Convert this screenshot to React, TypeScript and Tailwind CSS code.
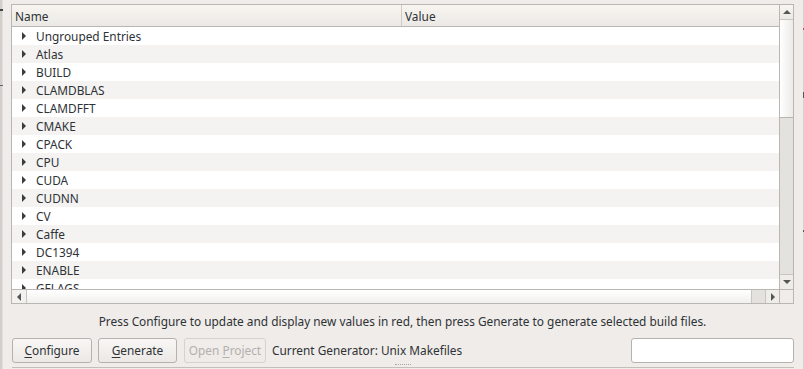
import React from "react";

const rows = [
    "Ungrouped Entries",
    "Atlas",
    "BUILD",
    "CLAMDBLAS",
    "CLAMDFFT",
    "CMAKE",
    "CPACK",
    "CPU",
    "CUDA",
    "CUDNN",
    "CV",
    "Caffe",
    "DC1394",
    "ENABLE",
    "GFLAGS",
];

function Arrow({ dir, className = "" }: { dir: "up" | "down" | "left" | "right"; className?: string }) {
    const pts = {
        up: "0,5 4,1 8,5",
        down: "0,1 4,5 8,1",
        left: "5,0 1,4 5,8",
        right: "1,0 5,4 1,8",
    }[dir];
    const vertical = dir === "up" || dir === "down";
    return (
        <svg width={vertical ? 8 : 6} height={vertical ? 6 : 8} viewBox={vertical ? "0 0 8 6" : "0 0 6 8"} className={className}>
            <polygon points={pts} fill="currentColor" />
        </svg>
    );
}

function Btn({ children, disabled }: { children: React.ReactNode; disabled?: boolean }) {
    return (
        <div
            className={
                "h-[25px] flex items-center justify-center rounded-[3px] border bg-gradient-to-b " +
                (disabled
                    ? "border-[#d6d3cf] from-[#f0edea] to-[#eeebe8] text-[#b3b0ad]"
                    : "border-[#b5b2ae] from-[#f9f7f5] to-[#ebe8e5] text-[#2e3236]")
            }
        >
            {children}
        </div>
    );
}

export default function App() {
    return (
        <div
            className="w-[804px] h-[369px] bg-[#efece9] flex overflow-hidden text-[11.85px] text-[#2e3236]"
            style={{ fontFamily: '"Noto Sans", "Open Sans", sans-serif' }}
        >
            {/* edge of neighbouring widget */}
            <div className="w-[3px] h-full bg-[#d2cecb] border-r border-[#e3dfdb] relative">
                <div className="absolute left-0 top-[9px] w-[3px] h-[2px] bg-[#444]" />
                <div className="absolute left-0 top-[85px] w-[3px] h-[1px] bg-[#666]" />
            </div>

            <div className="w-[800px] h-full pl-[8px] pr-[9px] flex flex-col">
                {/* cache tree */}
                <div className="mt-[4px] h-[300px] border border-[#bab7b3] bg-white grid grid-cols-[1fr_14px] grid-rows-[1fr_14px]">
                    <div className="flex flex-col overflow-hidden">
                        <div className="h-[22px] shrink-0 flex bg-gradient-to-b from-[#f8f5f1] to-[#ebe9e5] border-b border-[#bab7b3]">
                            <div className="w-[390px] border-r border-[#cfccc8] pl-[3px] pt-[1px] leading-[21px]">Name</div>
                            <div className="pl-[3px] pt-[1px] leading-[21px]">Value</div>
                        </div>
                        {rows.map((r, i) => (
                            <div
                                key={r}
                                className={"h-[18px] shrink-0 flex items-center " + (i % 2 ? "bg-[#f4f3f1]" : "bg-white")}
                            >
                                <div className="w-[24px] flex justify-center pr-[1px]">
                                    <Arrow dir="right" className="text-[#3a3d40]" />
                                </div>
                                <span className="pt-[2px]">{r}</span>
                            </div>
                        ))}
                    </div>

                    {/* vertical scrollbar */}
                    <div className="border-l border-[#bab7b3] flex flex-col bg-[#e3e2df]">
                        <div className="h-[15px] shrink-0 border-b border-[#c9c6c2] bg-gradient-to-b from-[#f8f6f3] to-[#ebe9e6] flex items-center justify-center">
                            <Arrow dir="up" className="text-[#555]" />
                        </div>
                        <div className="h-[98px] shrink-0 border-b border-[#b8b5b1] bg-gradient-to-r from-white to-[#ecebe8]" />
                        <div className="flex-1" />
                        <div className="h-[15px] shrink-0 border-t border-[#c9c6c2] bg-[#efedea] flex items-center justify-center">
                            <Arrow dir="down" className="text-[#555]" />
                        </div>
                    </div>

                    {/* horizontal scrollbar */}
                    <div className="border-t border-[#bab7b3] flex bg-[#e3e2df]">
                        <div className="w-[15px] shrink-0 border-r border-[#c9c6c2] bg-[#f3f1ee] flex items-center justify-center">
                            <Arrow dir="left" className="text-[#555]" />
                        </div>
                        <div className="flex-1 border-r border-[#c9c6c2] bg-gradient-to-b from-white to-[#f1f0ee]" />
                        <div className="w-[13px] shrink-0" />
                        <div className="w-[14px] shrink-0 border-l border-[#c9c6c2] bg-[#efedea] flex items-center justify-center">
                            <Arrow dir="right" className="text-[#555]" />
                        </div>
                    </div>
                    <div className="border-t border-l border-[#bab7b3] bg-[#efece9]" />
                </div>

                <div className="h-[34px] pt-[2px] flex items-center justify-center">
                    Press Configure to update and display new values in red, then press Generate to generate selected build files.
                </div>

                <div className="h-[25px] flex items-center ml-[1px]">
                    <div className="w-[80px]">
                        <Btn>
                            <span className="underline underline-offset-2">C</span>onfigure
                        </Btn>
                    </div>
                    <div className="w-[79px] ml-[6px]">
                        <Btn>
                            <span className="underline underline-offset-2">G</span>enerate
                        </Btn>
                    </div>
                    <div className="w-[82px] ml-[7px]">
                        <Btn disabled>
                            Open&nbsp;<span className="underline underline-offset-2">P</span>roject
                        </Btn>
                    </div>
                    <span className="ml-[6px]">Current Generator: Unix Makefiles</span>
                    <div className="ml-auto w-[163px] h-[25px] bg-white border border-[#b5b2ae] rounded-[3px]" />
                </div>

                <div className="h-[4px] flex justify-center items-start pt-[1px]">
                    <div className="w-[16px] h-[1px] border-t border-dotted border-[#a9a6a2]" />
                </div>
                <div className="h-[1px] ml-[1px] bg-[#c2bfbb]" />
            </div>

            <div className="w-[1px] h-full bg-[#d6d2ce] relative">
                <div className="absolute top-[28px] h-[2px] w-[1px] bg-[#b05070]" />
                <div className="absolute top-[92px] h-[6px] w-[1px] bg-[#555]" />
                <div className="absolute top-[230px] h-[2px] w-[1px] bg-[#555]" />
            </div>
        </div>
    );
}
